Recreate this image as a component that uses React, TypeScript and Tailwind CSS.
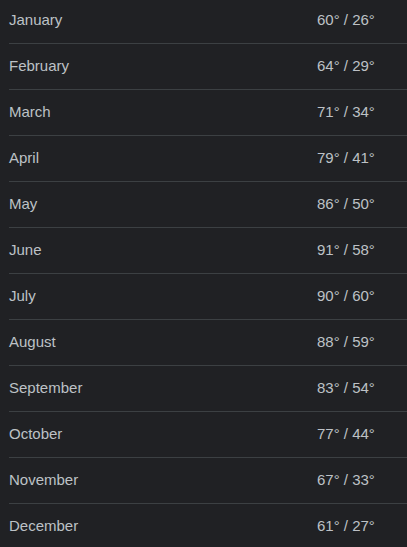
const months: [string, string][] = [
  ["January", "60° / 26°"],
  ["February", "64° / 29°"],
  ["March", "71° / 34°"],
  ["April", "79° / 41°"],
  ["May", "86° / 50°"],
  ["June", "91° / 58°"],
  ["July", "90° / 60°"],
  ["August", "88° / 59°"],
  ["September", "83° / 54°"],
  ["October", "77° / 44°"],
  ["November", "67° / 33°"],
  ["December", "61° / 27°"],
];

export default function App() {
  return (
    <div className="w-[407px] h-[547px] overflow-hidden bg-[#202124] font-['Liberation_Sans',Arial,sans-serif] text-[15px] text-[#bdc1c6]">
      <div className="-mt-[2px] pl-[9px]">
        {months.map(([name, temp]) => (
          <div key={name} className="flex h-[46px] items-center border-b border-[#3c4043]">
            <span className="w-[308px]">{name}</span>
            <span>{temp}</span>
          </div>
        ))}
      </div>
    </div>
  );
}
